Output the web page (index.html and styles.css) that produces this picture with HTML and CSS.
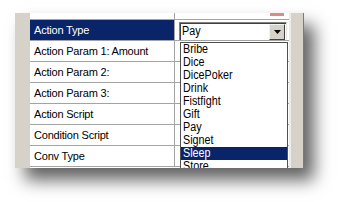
FILE: index.html
```html
<!DOCTYPE html>
<html>
<head>
<meta charset="utf-8">
<link rel="stylesheet" href="styles.css">
</head>
<body>
<div class="panel">
  <div class="gutter"></div>
  <div class="grid">
    <div class="row partial"><div class="name">Camera Shot</div><div class="value"><span class="redbit"></span></div></div>
    <div class="row sel"><div class="name">Action Type</div><div class="value">
      <div class="combo"><span class="combo-text"><span class="sq">Pay</span></span><span class="combo-btn"><svg width="7" height="4" viewBox="0 0 7 4"><path d="M0 0H7L3.5 4Z" fill="#000"/></svg></span></div>
    </div></div>
    <div class="row"><div class="name">Action Param 1: Amount</div><div class="value"></div></div>
    <div class="row"><div class="name">Action Param 2:</div><div class="value"></div></div>
    <div class="row"><div class="name">Action Param 3:</div><div class="value"></div></div>
    <div class="row"><div class="name">Action Script</div><div class="value"></div></div>
    <div class="row"><div class="name">Condition Script</div><div class="value"></div></div>
    <div class="row"><div class="name">Conv Type</div><div class="value"></div></div>
  </div>
  <div class="strip"></div>
  <div class="popup">
    <div class="item"><span class="sq">Bribe</span></div>
    <div class="item"><span class="sq">Dice</span></div>
    <div class="item"><span class="sq">DicePoker</span></div>
    <div class="item"><span class="sq">Drink</span></div>
    <div class="item"><span class="sq">Fistfight</span></div>
    <div class="item"><span class="sq">Gift</span></div>
    <div class="item"><span class="sq">Pay</span></div>
    <div class="item"><span class="sq">Signet</span></div>
    <div class="item hl"><span class="sq">Sleep</span></div>
    <div class="item"><span class="sq">Store</span></div>
  </div>
</div>
</body>
</html>
```
FILE: styles.css
```css
html, body {
  margin: 0;
  padding: 0;
  background: #fff;
}
body {
  width: 339px;
  height: 202px;
  overflow: hidden;
  padding-top: 13px;
  padding-left: 15px;
  box-sizing: border-box;
}
.panel {
  position: relative;
  display: flex;
  width: 289px;
  height: 155px;
  overflow: hidden;
  box-shadow: 10px 12px 16px rgba(0, 0, 0, 0.62);
  background: #fff;
}
.gutter {
  width: 15px;
  flex: none;
  background: #d6d2ca;
}
.grid {
  flex: none;
  width: 259px;
  margin-top: -14px;
  display: flex;
  flex-direction: column;
}
.row {
  display: flex;
  height: 20px;
  border-bottom: 1px solid #a3a3a3;
  flex: none;
}
.name {
  width: 145px;
  flex: none;
  box-sizing: border-box;
  padding-left: 4px;
  border-right: 1px solid #a3a3a3;
  font-family: "Liberation Sans", Arial, sans-serif;
  font-size: 11px;
  letter-spacing: -0.2px;
  line-height: 20px;
  color: #000;
  white-space: nowrap;
}
.value {
  flex: 1;
  display: flex;
  position: relative;
}
.partial .name {
  color: #a0a0a0;
}
.partial .value {
  justify-content: flex-end;
  align-items: flex-end;
}
.redbit {
  width: 14px;
  height: 3px;
  margin-right: 5px;
  margin-bottom: 3px;
  background: #d98a8a;
}
.sel .name {
  background: #0a246a;
  color: #fff;
}
.combo {
  margin: 2px 2px 0 4px;
  flex: 1;
  height: 18px;
  box-sizing: border-box;
  border-top: 1px solid #808080;
  border-left: 1px solid #808080;
  border-right: 1px solid #e8e6e0;
  display: flex;
  align-items: stretch;
  background: #fff;
  box-shadow: inset 1px 1px 0 #404040;
}
.combo-text {
  flex: 1;
  padding-left: 2px;
  font-family: "Liberation Sans", Arial, sans-serif;
  font-size: 12.5px;
  line-height: 17px;
  color: #000;
}
.sq {
  display: inline-block;
  transform: scaleX(0.86);
  transform-origin: left center;
}
.combo-btn {
  width: 16px;
  margin: 1px 1px 0 0;
  background: #d6d2ca;
  border-top: 1px solid #f4f3ee;
  border-left: 1px solid #f4f3ee;
  border-right: 1px solid #404040;
  border-bottom: 1px solid #404040;
  box-sizing: border-box;
  display: flex;
  align-items: center;
  justify-content: center;
}
.strip {
  flex: none;
  width: 12px;
  background: #d6d2ca;
  border-left: 2px solid #eeece6;
  border-right: 1px solid #7a7a7a;
}
.popup {
  position: absolute;
  left: 165px;
  top: 29px;
  width: 108px;
  box-sizing: border-box;
  border: 1px solid #505050;
  background: #fff;
}
.item {
  height: 13px;
  line-height: 13px;
  padding-left: 2px;
  font-family: "Liberation Sans", Arial, sans-serif;
  font-size: 12.5px;
  color: #000;
  white-space: nowrap;
}
.item.hl {
  background: #0a246a;
  color: #fff;
}
```
